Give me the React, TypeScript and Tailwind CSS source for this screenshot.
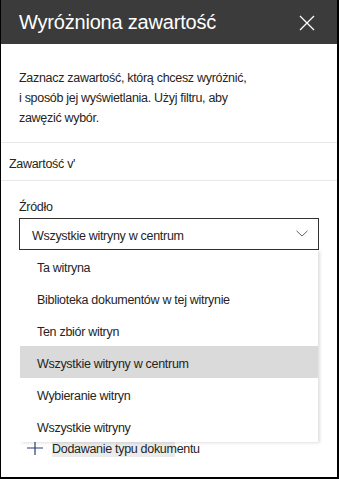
import React from "react";

const items = [
  "Ta witryna",
  "Biblioteka dokumentów w tej witrynie",
  "Ten zbiór witryn",
  "Wszystkie witryny w centrum",
  "Wybieranie witryn",
  "Wszystkie witryny",
];

export default function App() {
  return (
    <div
      className="w-[339px] h-[479px] bg-white border-l border-r-2 border-b-2 border-black relative overflow-hidden text-[#252423]"
      style={{ fontFamily: '"Liberation Sans", Arial, sans-serif' }}
    >
      <div className="h-[44px] bg-[#3b3b3b] flex items-center justify-between pl-[18px] pr-[22px]">
        <span className="text-white text-[20px] leading-none tracking-[-0.2px]">Wyróżniona zawartość</span>
        <svg width="16" height="16" viewBox="0 0 16 16" className="mt-[1px]">
          <path d="M1 1 L15 15 M15 1 L1 15" stroke="white" strokeWidth="1.3" />
        </svg>
      </div>
      <div className="pt-[24px] pl-[18px] pr-[10px] pb-[14px] text-[12.5px] leading-[20px] tracking-[-0.3px]">
        <p>Zaznacz zawartość, którą chcesz wyróżnić,</p>
        <p>i sposób jej wyświetlania. Użyj filtru, aby</p>
        <p>zawęzić wybór.</p>
      </div>
      <div className="border-t border-b border-[#e8e8e8] h-[39px] flex items-center pl-[8px] pt-[6px] text-[12.5px] tracking-[-0.3px]">
        Zawartość v'
      </div>
      <div className="px-[18px] pt-[18px]">
        <div className="text-[12.5px] leading-[16px] tracking-[-0.3px] mb-[3px]">Źródło</div>
        <div className="relative">
          <div className="h-[32px] border border-[#323130] flex items-center justify-between pl-[12px] pr-[10px] text-[12.5px] tracking-[-0.3px]">
            <span className="pt-[4px]">Wszystkie witryny w centrum</span>
            <svg width="12" height="7" viewBox="0 0 12 7" className="mb-[1px]">
              <path d="M0.5 0.8 L6 6 L11.5 0.8" fill="none" stroke="#666" strokeWidth="1" />
            </svg>
          </div>
          <div className="absolute left-[1px] right-[1px] top-[32px] bg-white shadow-[2px_1px_3px_rgba(0,0,0,0.13)] z-10">
            {items.map((it, i) => (
              <div
                key={it}
                className={`h-[32px] flex items-center pl-[17px] pt-[5px] text-[12.5px] tracking-[-0.3px] ${
                  i === 3 ? "bg-[#dadada]" : ""
                }`}
              >
                {it}
              </div>
            ))}
          </div>
        </div>
      </div>
      <div className="mt-[190px] pl-[26px] flex items-center h-[15px]">
        <svg width="16" height="16" viewBox="0 0 16 16">
          <path d="M8 1 L8 15 M0 8 L16 8" stroke="#2b3a78" strokeWidth="1.2" />
        </svg>
        <span className="ml-[9px] w-[123px] bg-[#ebebeb] whitespace-nowrap overflow-visible text-[12.5px] leading-[16px] tracking-[-0.3px] pt-[2px]">
          Dodawanie typu dokumentu
        </span>
      </div>
    </div>
  );
}
